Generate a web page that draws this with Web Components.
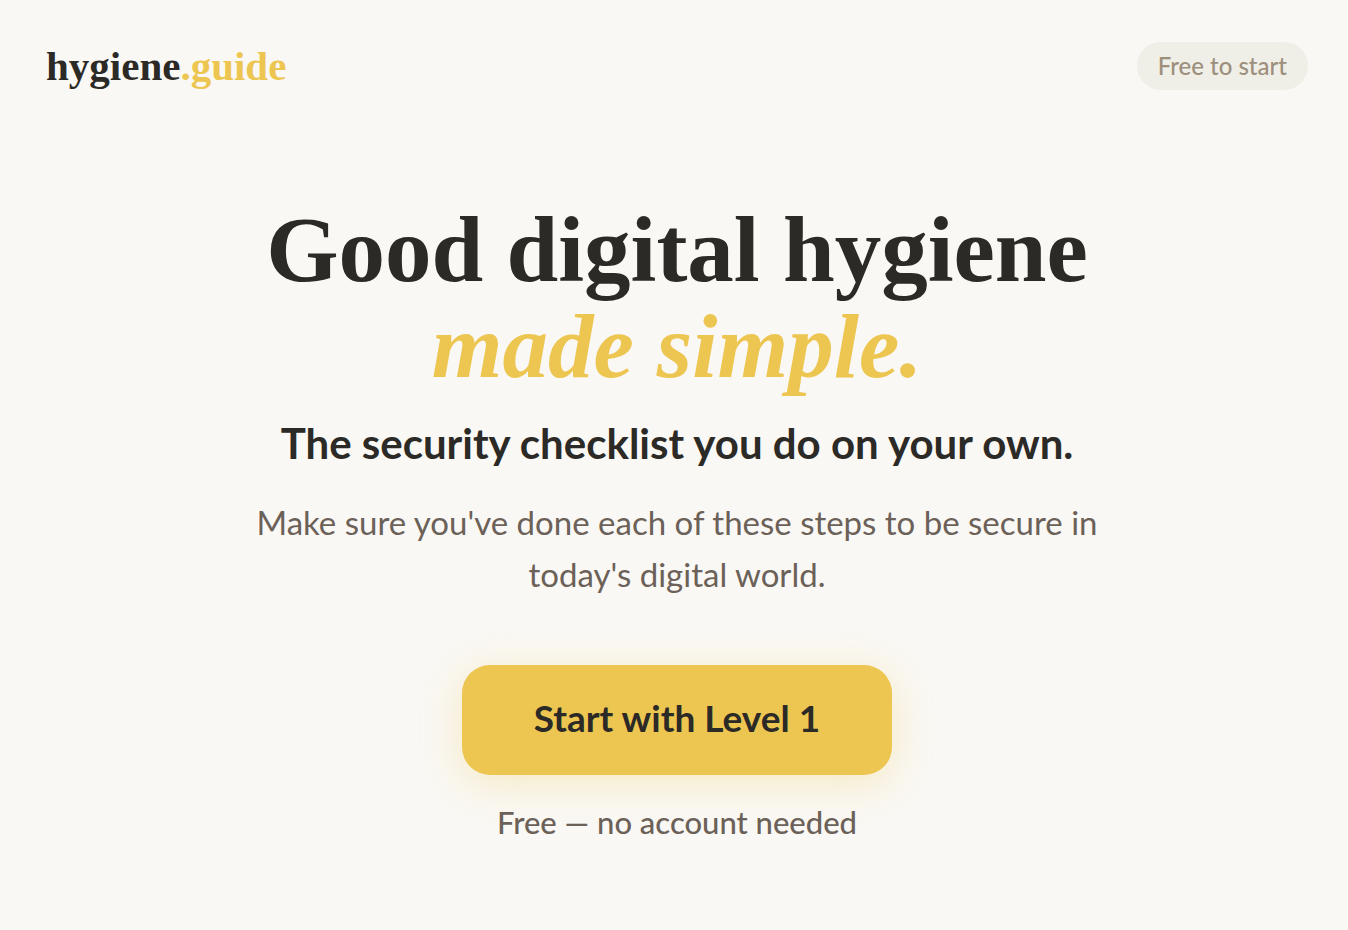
<!DOCTYPE html>
<html lang="en">
<head>
<meta charset="utf-8">
<meta name="viewport" content="width=device-width, initial-scale=1">
<title>hygiene.guide</title>
<style>
  body {
    margin: 0;
    background: #faf8f4;
    color: #2c2a26;
    font-family: Lato, "Noto Sans", sans-serif;
    --ink: #2c2a26;
    --muted: #6b6158;
    --soft: #9c8f7c;
    --honey: #edc651;
    --display: "Liberation Serif", serif;
  }
</style>
</head>
<body>
<landing-page></landing-page>

<script>
  const define = (name, html) => {
    const template = document.createElement('template');
    template.innerHTML = html;
    customElements.define(name, class extends HTMLElement {
      constructor() {
        super();
        this.attachShadow({ mode: 'open' }).append(template.content.cloneNode(true));
      }
    });
  };

  define('brand-logo', `
    <style>
      :host { display: block; }
      a { color: var(--ink); text-decoration: none; font: 700 41px/48px var(--display); }
      span { color: var(--honey); }
    </style>
    <a href="#">hygiene<span>.guide</span></a>`);

  define('pill-tag', `
    <style>
      :host { display: block; padding: 0 21px; border-radius: 24px; background: #efeee7; color: var(--soft); font-size: 24px; font-weight: 500; line-height: 48px; white-space: nowrap; }
    </style>
    <slot></slot>`);

  define('site-header', `
    <style>
      :host { display: block; }
      header { display: flex; justify-content: space-between; align-items: center; padding: 42px 0 0; }
    </style>
    <header><brand-logo></brand-logo><pill-tag>Free to start</pill-tag></header>`);

  define('cta-button', `
    <style>
      :host { display: block; }
      button { display: block; padding: 26px 72px 30px; border: 0; border-radius: 28px; background: var(--honey); color: var(--ink); font: inherit; font-size: 37px; font-weight: 700; line-height: 54px; box-shadow: 0 8px 40px rgb(237 198 81 / 30%); cursor: pointer; }
    </style>
    <button type="button"><slot></slot></button>`);

  define('hero-section', `
    <style>
      :host { display: block; }
      section { display: flex; flex-direction: column; align-items: center; max-width: 860px; margin: 0 auto; padding: 111px 0 72px; text-align: center; }
      h1, p { margin: 0; }
      h1 { font: 700 93px/97px var(--display); }
      em { display: block; color: var(--honey); font-size: 91px; }
      .lead { margin-top: 22px; font-size: 42px; font-weight: 700; line-height: 52px; }
      .body { margin: 27px 0 65px; color: var(--muted); font-size: 33px; line-height: 52px; }
      .note { margin-top: 27px; color: var(--muted); font-size: 31px; font-weight: 500; line-height: 40px; }
    </style>
    <section>
      <h1>Good digital hygiene <em>made simple.</em></h1>
      <p class="lead">The security checklist you do on your own.</p>
      <p class="body">Make sure you've done each of these steps to be secure in today's digital world.</p>
      <cta-button>Start with Level 1</cta-button>
      <p class="note">Free — no account needed</p>
    </section>`);

  define('landing-page', `
    <style>
      :host { display: block; padding: 0 40px 0 46px; }
    </style>
    <site-header></site-header>
    <main><hero-section></hero-section></main>`);
</script>
</body>
</html>
